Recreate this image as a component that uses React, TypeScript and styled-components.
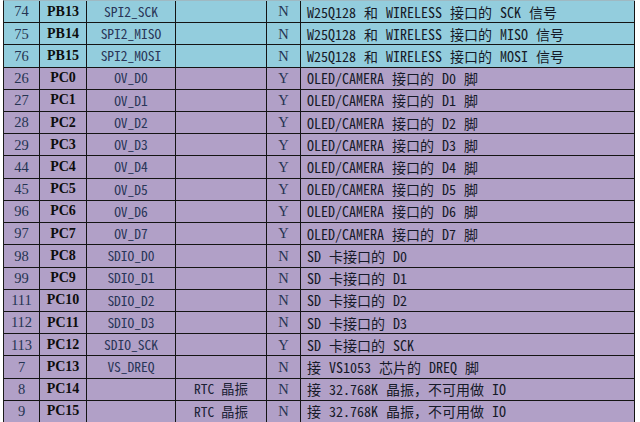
import React from "react";
import styled, { createGlobalStyle } from "styled-components";

const Global = createGlobalStyle`
  html, body { margin: 0; padding: 0; background: #ffffff; }
  body { width: 640px; height: 422px; overflow: hidden; }
`;

const Page = styled.div`
  padding-left: 3px;
  width: 640px;
  height: 422px;
  box-sizing: border-box;
  overflow: hidden;
`;

const Table = styled.div`
  display: grid;
  grid-template-columns: 36px 47px 89px 91px 34px 334px;
  grid-template-rows: repeat(19, 1fr);
  height: 423px;
  width: 632px;
  box-sizing: border-box;
  border-left: 1px solid #1a1a1a;
  border-top: 1px solid #9fb9c2;
  font-family: "Liberation Serif", "Noto Sans CJK SC", serif;
`;

type Tone = "blue" | "purple";

const Row = styled.div<{ $tone: Tone }>`
  display: contents;
  & > div {
    background: ${(p) => (p.$tone === "blue" ? "#93cddd" : "#b1a0c7")};
  }
`;

const Cell = styled.div<{ $align?: "center" | "left" }>`
  display: flex;
  align-items: center;
  justify-content: ${(p) => (p.$align === "left" ? "flex-start" : "center")};
  padding: ${(p) => (p.$align === "left" ? "0 0 0 6px" : "0")};
  border-right: 1px solid #141414;
  border-bottom: 1px solid #141414;
  box-sizing: border-box;
  min-width: 0;
  white-space: pre;
  overflow: hidden;
  line-height: 1;
`;

const NumCell = styled(Cell)`
  font-size: 14.5px;
  color: #253452;
`;

const PinCell = styled(Cell)`
  font-size: 14px;
  font-weight: bold;
  color: #0d0d0d;
`;

const monoCjk = `"Noto Sans Mono CJK SC", "Liberation Serif", "Noto Sans CJK SC", monospace`;

const FuncCell = styled(Cell)`
  font-family: ${monoCjk};
  font-size: 13.5px;
  color: #2a3658;
`;

const NoteCell = styled(Cell)`
  font-family: ${monoCjk};
  font-size: 13.5px;
  color: #1c2236;
`;

const FlagCell = styled(Cell)`
  font-size: 14.5px;
  color: #253452;
`;

const DescCell = styled(Cell)`
  font-family: ${monoCjk};
  font-size: 14px;
  word-spacing: 1px;
  color: #161a28;
`;

type Pin = {
  no: number;
  pin: string;
  fn: string;
  note: string;
  flag: string;
  desc: string;
  tone: Tone;
};

const pins: Pin[] = [
  { no: 74, pin: "PB13", fn: "SPI2_SCK", note: "", flag: "N", desc: "W25Q128 和 WIRELESS 接口的 SCK 信号", tone: "blue" },
  { no: 75, pin: "PB14", fn: "SPI2_MISO", note: "", flag: "N", desc: "W25Q128 和 WIRELESS 接口的 MISO 信号", tone: "blue" },
  { no: 76, pin: "PB15", fn: "SPI2_MOSI", note: "", flag: "N", desc: "W25Q128 和 WIRELESS 接口的 MOSI 信号", tone: "blue" },
  { no: 26, pin: "PC0", fn: "OV_D0", note: "", flag: "Y", desc: "OLED/CAMERA 接口的 D0 脚", tone: "purple" },
  { no: 27, pin: "PC1", fn: "OV_D1", note: "", flag: "Y", desc: "OLED/CAMERA 接口的 D1 脚", tone: "purple" },
  { no: 28, pin: "PC2", fn: "OV_D2", note: "", flag: "Y", desc: "OLED/CAMERA 接口的 D2 脚", tone: "purple" },
  { no: 29, pin: "PC3", fn: "OV_D3", note: "", flag: "Y", desc: "OLED/CAMERA 接口的 D3 脚", tone: "purple" },
  { no: 44, pin: "PC4", fn: "OV_D4", note: "", flag: "Y", desc: "OLED/CAMERA 接口的 D4 脚", tone: "purple" },
  { no: 45, pin: "PC5", fn: "OV_D5", note: "", flag: "Y", desc: "OLED/CAMERA 接口的 D5 脚", tone: "purple" },
  { no: 96, pin: "PC6", fn: "OV_D6", note: "", flag: "Y", desc: "OLED/CAMERA 接口的 D6 脚", tone: "purple" },
  { no: 97, pin: "PC7", fn: "OV_D7", note: "", flag: "Y", desc: "OLED/CAMERA 接口的 D7 脚", tone: "purple" },
  { no: 98, pin: "PC8", fn: "SDIO_D0", note: "", flag: "N", desc: "SD 卡接口的 D0", tone: "purple" },
  { no: 99, pin: "PC9", fn: "SDIO_D1", note: "", flag: "N", desc: "SD 卡接口的 D1", tone: "purple" },
  { no: 111, pin: "PC10", fn: "SDIO_D2", note: "", flag: "N", desc: "SD 卡接口的 D2", tone: "purple" },
  { no: 112, pin: "PC11", fn: "SDIO_D3", note: "", flag: "N", desc: "SD 卡接口的 D3", tone: "purple" },
  { no: 113, pin: "PC12", fn: "SDIO_SCK", note: "", flag: "Y", desc: "SD 卡接口的 SCK", tone: "purple" },
  { no: 7, pin: "PC13", fn: "VS_DREQ", note: "", flag: "N", desc: "接 VS1053 芯片的 DREQ 脚", tone: "purple" },
  { no: 8, pin: "PC14", fn: "", note: "RTC 晶振", flag: "N", desc: "接 32.768K 晶振，不可用做 IO", tone: "purple" },
  { no: 9, pin: "PC15", fn: "", note: "RTC 晶振", flag: "N", desc: "接 32.768K 晶振，不可用做 IO", tone: "purple" },
];

export default function App() {
  return (
    <Page>
      <Global />
      <Table>
        {pins.map((p) => (
          <Row key={p.pin} $tone={p.tone}>
            <NumCell>{p.no}</NumCell>
            <PinCell>{p.pin}</PinCell>
            <FuncCell>{p.fn}</FuncCell>
            <NoteCell>{p.note}</NoteCell>
            <FlagCell>{p.flag}</FlagCell>
            <DescCell $align="left">{p.desc}</DescCell>
          </Row>
        ))}
      </Table>
    </Page>
  );
}
